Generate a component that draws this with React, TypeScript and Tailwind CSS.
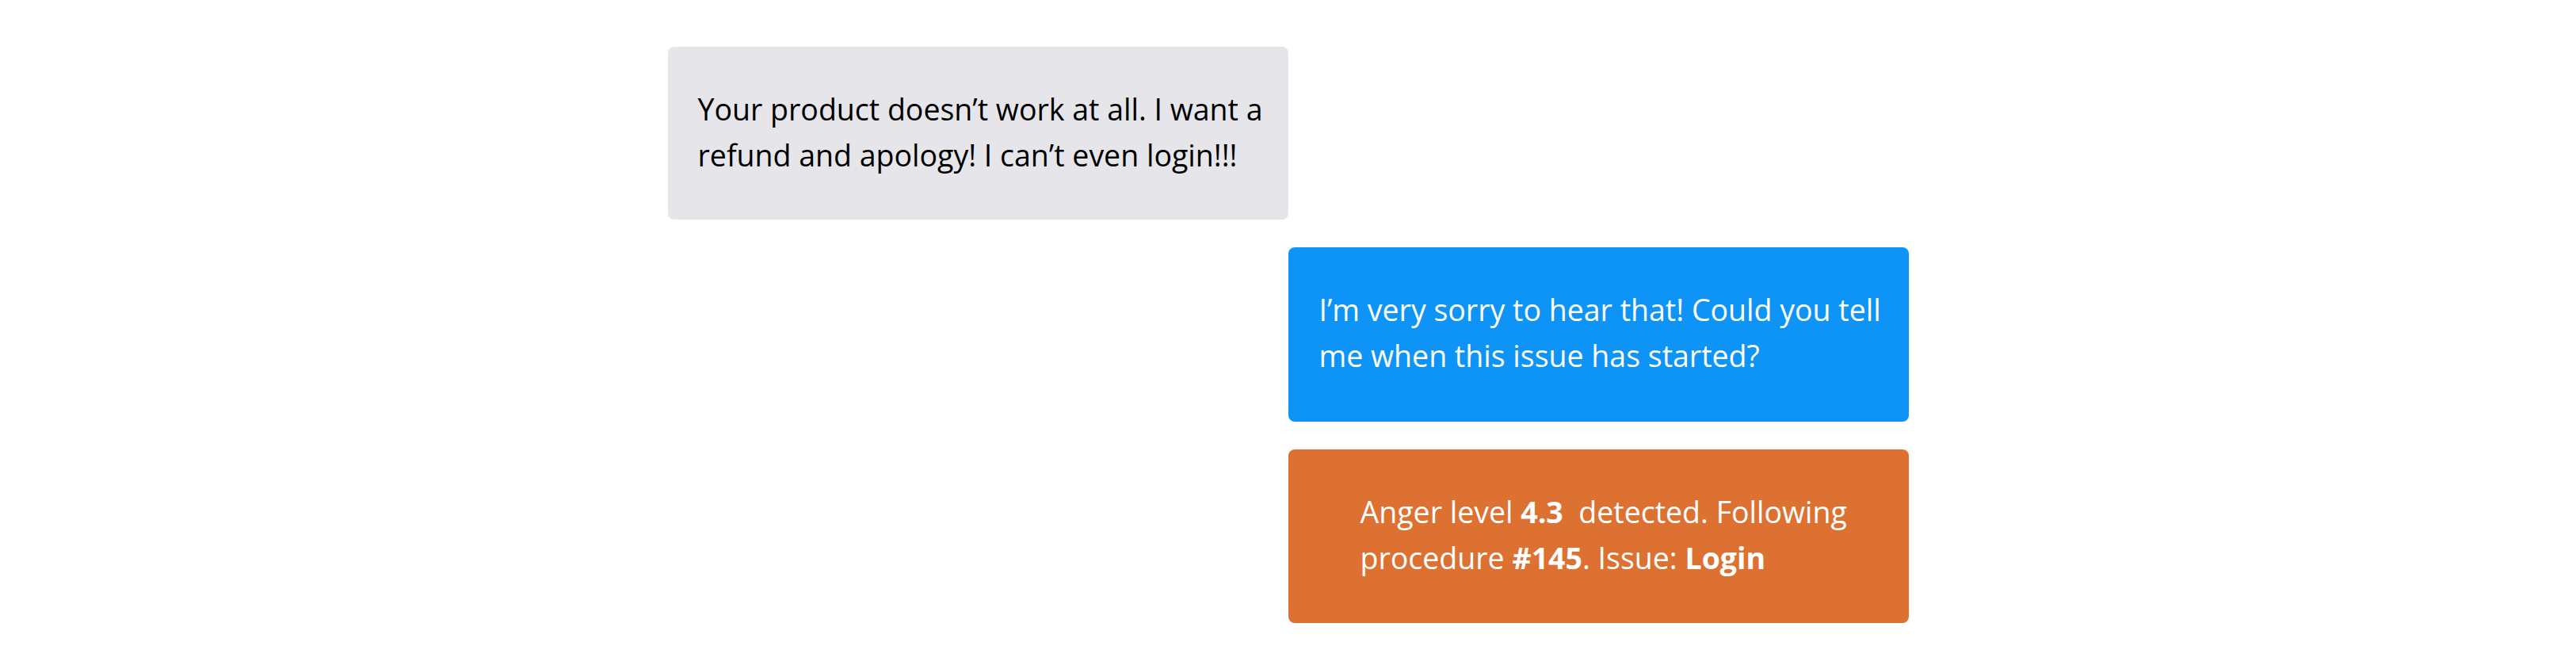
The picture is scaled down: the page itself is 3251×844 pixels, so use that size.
export default function App() {
  return (
    <div className="min-h-[844px] w-full bg-white flex items-center justify-center font-['Open_Sans',sans-serif] text-[37.5px] leading-[58px]">
      <div className="w-[1566px] flex flex-col gap-[35px]">
        <div className="self-start w-[783px] h-[218px] rounded-[8px] bg-[#e5e5ea] text-black pl-[38px] pr-[10px] pt-[50px]">
          Your product doesn’t work at all. I want a
          <br />
          refund and apology! I can’t even login!!!
        </div>
        <div className="self-end w-[783px] h-[220px] rounded-[8px] bg-[#0d94f6] text-white pl-[39px] pr-[10px] pt-[50px]">
          I’m very sorry to hear that! Could you tell
          <br />
          me when this issue has started?
        </div>
        <div className="self-end w-[783px] h-[219px] rounded-[8px] bg-[#dd7131] text-white pl-[91px] pr-[10px] pt-[50px]">
          Anger level <span className="font-bold">4.3</span>&nbsp; detected. Following
          <br />
          procedure <span className="font-bold">#145</span>. Issue: <span className="font-bold">Login</span>
        </div>
      </div>
    </div>
  );
}
